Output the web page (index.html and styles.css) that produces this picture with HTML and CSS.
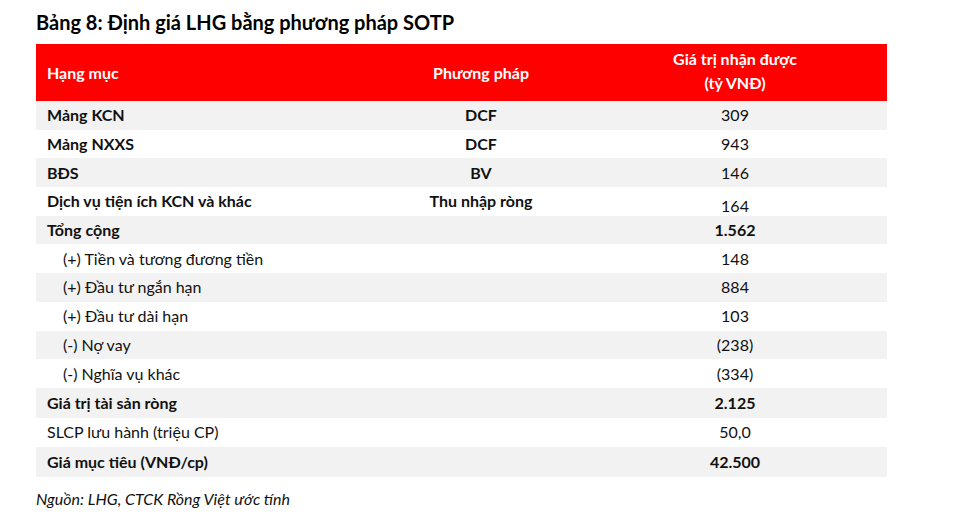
FILE: index.html
```html
<!DOCTYPE html>
<html lang="vi">
<head>
<meta charset="utf-8">
<link rel="stylesheet" href="styles.css">
</head>
<body>
<div class="page">
  <h1 class="title">Bảng 8: Định giá LHG bằng phương pháp SOTP</h1>
  <table class="sotp">
    <colgroup>
      <col class="c1"><col class="c2"><col class="c3">
    </colgroup>
    <thead>
      <tr>
        <th class="left">Hạng mục</th>
        <th>Phương pháp</th>
        <th><span class="hl">Giá trị nhận được</span><span class="hl">(tỷ VNĐ)</span></th>
      </tr>
    </thead>
    <tbody>
      <tr class="g"><td class="b">Mảng KCN</td><td class="m b">DCF</td><td class="v">309</td></tr>
      <tr><td class="b">Mảng NXXS</td><td class="m b">DCF</td><td class="v">943</td></tr>
      <tr class="g"><td class="b">BĐS</td><td class="m b">BV</td><td class="v">146</td></tr>
      <tr><td class="b">Dịch vụ tiện ích KCN và khác</td><td class="m b up">Thu nhập ròng</td><td class="v dn">164</td></tr>
      <tr class="g"><td class="b">Tổng cộng</td><td></td><td class="v b">1.562</td></tr>
      <tr><td class="ind">(+) Tiền và tương đương tiền</td><td></td><td class="v">148</td></tr>
      <tr class="g"><td class="ind">(+) Đầu tư ngắn hạn</td><td></td><td class="v">884</td></tr>
      <tr><td class="ind">(+) Đầu tư dài hạn</td><td></td><td class="v">103</td></tr>
      <tr class="g"><td class="ind">(-) Nợ vay</td><td></td><td class="v">(238)</td></tr>
      <tr><td class="ind">(-) Nghĩa vụ khác</td><td></td><td class="v">(334)</td></tr>
      <tr class="g tall"><td class="b">Giá trị tài sản ròng</td><td></td><td class="v b">2.125</td></tr>
      <tr><td>SLCP lưu hành (triệu CP)</td><td></td><td class="v">50,0</td></tr>
      <tr class="g tall"><td class="b">Giá mục tiêu (VNĐ/cp)</td><td></td><td class="v b">42.500</td></tr>
    </tbody>
  </table>
  <p class="source">Nguồn: LHG, CTCK Rồng Việt ước tính</p>
</div>
</body>
</html>
```
FILE: styles.css
```css
html, body {
  margin: 0;
  padding: 0;
  background: #ffffff;
}
body {
  font-family: "Lato", "Open Sans", sans-serif;
  color: #111111;
}
.page {
  padding: 9px 0 0 36px;
  width: 851px;
}
.title {
  margin: 0 0 8px 0;
  font-size: 20px;
  font-weight: 700;
  line-height: 27px;
  color: #000;
}
.sotp {
  border-collapse: collapse;
  width: 851px;
  table-layout: fixed;
  font-size: 16px;
}
.c1 { width: 343px; }
.c2 { width: 204px; }
.c3 { width: 304px; }
.sotp thead tr {
  background: #ff0000;
  height: 57px;
}
.sotp th {
  color: #ffffff;
  font-weight: 700;
  text-align: center;
  padding: 0 0 4px 0;
  vertical-align: middle;
}
.sotp th.left {
  text-align: left;
  padding: 0 0 0 11px;
}
.sotp th:nth-child(2) { padding: 0; }
.hl {
  display: block;
  line-height: 24px;
}
.sotp tbody tr {
  height: 28.7px;
}
.sotp tbody tr.tall { height: 30px; }
.sotp tr.g { background: #f2f2f2; }
.sotp td {
  padding: 0 0 0 11px;
  line-height: 18px;
  vertical-align: middle;
}
.sotp td.m, .sotp td.v {
  text-align: center;
  padding: 0;
}
.sotp td.ind { padding-left: 27px; }
.b { font-weight: 700; }
.up { position: relative; top: 0; }
.dn { position: relative; top: 5px; }
.source {
  margin: 12px 0 0 0;
  font-style: italic;
  font-size: 16px;
  color: #111;
}
```
